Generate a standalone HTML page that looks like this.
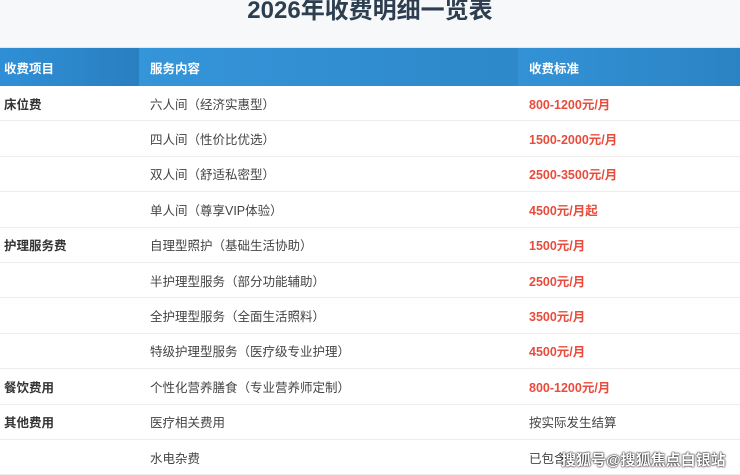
<!DOCTYPE html>
<html><head><meta charset="utf-8"><style>
body{margin:0;width:740px;height:474px;overflow:hidden;background:#fff;font-family:"Liberation Sans","Noto Sans CJK SC",sans-serif;}
.top{height:47px;background:#f7f8fa;border-bottom:1px solid #e3e6ea;position:relative;}
h1{margin:0;position:absolute;top:-6px;left:0;width:740px;text-align:center;font-size:24px;color:#2c3e50;font-weight:bold;line-height:34px;}
table{border-collapse:collapse;width:740px;table-layout:fixed;}
th{height:38px;color:#fff;font-size:12.5px;text-align:left;padding:0 0 0 4px;font-weight:bold;}
th.a{background:linear-gradient(90deg,#2f8fd6,#2a7fc0);width:135px;}
th.b{background:linear-gradient(90deg,#3595d9,#2e88c9);padding-left:11px;width:368px;}
th.c{background:linear-gradient(90deg,#3392d6,#2b83c4);padding-left:11px;}
td{height:34.4px;border-bottom:1px solid #ececec;font-size:12.5px;color:#444;padding:0 0 0 4px;}
td.b,td.c{padding-left:11px;}
td.a{font-weight:bold;color:#333;}
.r{color:#e74c3c;font-weight:bold;}
.wm{position:absolute;left:561px;top:449px;font-size:15px;color:#fff;font-weight:bold;text-shadow:0 0 2px #000,0 0 1px #000;}
</style></head><body>
<div class="top"><h1>2026年收费明细一览表</h1></div>
<table>
<tr><th class="a">收费项目</th><th class="b">服务内容</th><th class="c">收费标准</th></tr>
<tr><td class="a">床位费</td><td class="b">六人间（经济实惠型）</td><td class="c r">800-1200元/月</td></tr>
<tr><td class="a"></td><td class="b">四人间（性价比优选）</td><td class="c r">1500-2000元/月</td></tr>
<tr><td class="a"></td><td class="b">双人间（舒适私密型）</td><td class="c r">2500-3500元/月</td></tr>
<tr><td class="a"></td><td class="b">单人间（尊享VIP体验）</td><td class="c r">4500元/月起</td></tr>
<tr><td class="a">护理服务费</td><td class="b">自理型照护（基础生活协助）</td><td class="c r">1500元/月</td></tr>
<tr><td class="a"></td><td class="b">半护理型服务（部分功能辅助）</td><td class="c r">2500元/月</td></tr>
<tr><td class="a"></td><td class="b">全护理型服务（全面生活照料）</td><td class="c r">3500元/月</td></tr>
<tr><td class="a"></td><td class="b">特级护理型服务（医疗级专业护理）</td><td class="c r">4500元/月</td></tr>
<tr><td class="a">餐饮费用</td><td class="b">个性化营养膳食（专业营养师定制）</td><td class="c r">800-1200元/月</td></tr>
<tr><td class="a">其他费用</td><td class="b">医疗相关费用</td><td class="c">按实际发生结算</td></tr>
<tr><td class="a"></td><td class="b">水电杂费</td><td class="c">已包含</td></tr>
</table>
<div class="wm">搜狐号@搜狐焦点白银站</div>
</body></html>
